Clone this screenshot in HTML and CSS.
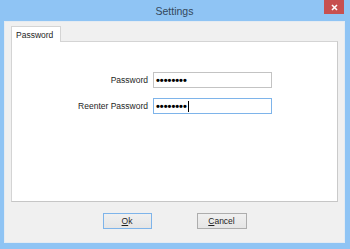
FILE: index.html
```html
<!DOCTYPE html>
<html>
<head>
  <title>Settings</title>
  <link rel="stylesheet" href="styles.css">
</head>
<body>
  <div class="window">
    <!-- Title bar -->
    <div class="titlebar">
      <span class="title">Settings</span>
      <button class="close-button" aria-label="Close">
        <svg width="7" height="7" viewBox="0 0 7 7"><path d="M1 1 L6 6 M6 1 L1 6" stroke="#fff" stroke-width="1.6"/></svg>
      </button>
    </div>

    <!-- Client area -->
    <div class="client">
      <div class="tab-strip">
        <div class="tab active">Password</div>
      </div>
      <div class="tab-panel">
        <form class="password-form">
          <label for="passwordInput">Password</label>
          <div class="field" id="passwordInput">••••••••</div>
          <label for="reenterInput">Reenter Password</label>
          <div class="field focused" id="reenterInput">••••••••<span class="caret"></span></div>
        </form>
      </div>
      <div class="button-row">
        <button class="dialog-button default"><u>O</u>k</button>
        <button class="dialog-button"><u>C</u>ancel</button>
      </div>
    </div>
  </div>
</body>
</html>
```

FILE: styles.css
```css
/* Windows 8 style dialog */
body {
  margin: 0;
  font-family: "Liberation Sans", Arial, sans-serif;
  font-size: 8.5px;
  color: #1e1e1e;
}

.window {
  width: 350px;
  height: 249px;
  background-color: #8fc4f4;
  display: flex;
  flex-direction: column;
  box-sizing: border-box;
  padding: 0 5px 6px 4px;
}

.titlebar {
  position: relative;
  height: 21px;
  display: flex;
  justify-content: center;
  align-items: center;
  flex-shrink: 0;
}
.title {
  font-size: 10.5px;
  color: #33475b;
  margin-top: 1px;
}
.close-button {
  position: absolute;
  top: 0;
  right: 1px;
  width: 20px;
  height: 14px;
  padding: 0;
  border: none;
  background-color: #c75050;
  display: flex;
  justify-content: center;
  align-items: center;
}

/* Client area */
.client {
  flex: 1;
  background-color: #f0f0f0;
  border: 1px solid #e4ebf2;
  padding: 4px 6px 0 6px;
  display: flex;
  flex-direction: column;
}

.tab-strip {
  display: flex;
}
.tab {
  position: relative;
  z-index: 1;
  height: 15px;
  width: 39px;
  padding: 0 5px 0 4px;
  margin-bottom: -1px;
  background-color: #ffffff;
  border: 1px solid #d4d4d4;
  border-bottom: none;
  display: flex;
  align-items: center;
}

.tab-panel {
  height: 161px;
  box-sizing: border-box;
  background-color: #ffffff;
  border: 1px solid #d4d4d4;
  border-right-color: #cacaca;
  border-bottom-color: #c6c6c6;
  padding-top: 30px;
}

.password-form {
  display: grid;
  grid-template-columns: 136px 119px;
  column-gap: 5px;
  row-gap: 10px;
  align-items: center;
}
.password-form label {
  text-align: right;
  color: #1e1e1e;
}
.field {
  height: 16px;
  box-sizing: border-box;
  border: 1px solid #c3c3c3;
  background-color: #ffffff;
  padding-left: 2px;
  display: flex;
  align-items: center;
  font-size: 11px;
  font-weight: bold;
  color: #000000;
}
.field.focused {
  border-color: #7eb4ea;
}
.caret {
  display: inline-block;
  width: 1px;
  height: 11px;
  margin-left: 1px;
  background-color: #000000;
}

/* Dialog buttons */
.button-row {
  display: flex;
  justify-content: center;
  gap: 45px;
  margin-top: 11px;
}
.dialog-button {
  width: 50px;
  height: 16px;
  padding: 0;
  font-family: inherit;
  font-size: 8.5px;
  color: #1e1e1e;
  border: 1px solid #adadad;
  background: linear-gradient(#f0f0f0, #e5e5e5);
}
.dialog-button.default {
  width: 49px;
  border-color: #7eb4ea;
}
.dialog-button u {
  text-underline-offset: 1px;
}
```
